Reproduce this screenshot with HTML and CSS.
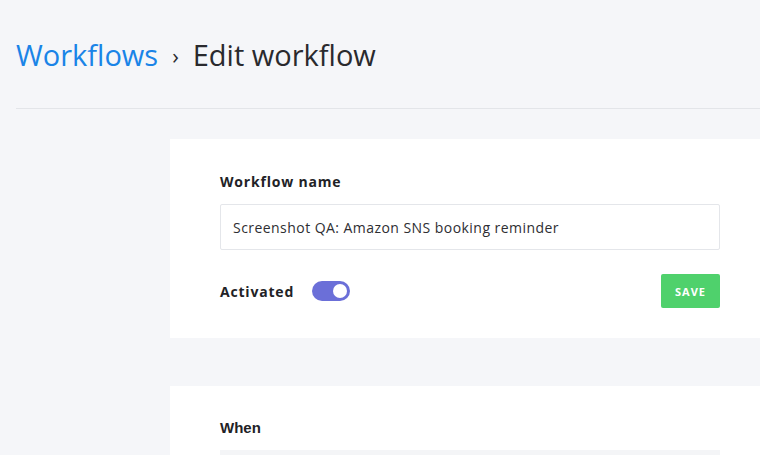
FILE: index.html
```html
<!DOCTYPE html>
<html lang="en">
<head>
  <meta charset="UTF-8">
  <meta name="viewport" content="width=device-width, initial-scale=1.0">
  <title>Edit workflow</title>
  <link rel="stylesheet" href="styles.css">
</head>
<body>
  <header class="page-header">
    <h1 class="breadcrumb">
      <a href="#workflows" class="crumb-link">Workflows</a>
      <span class="crumb-sep">›</span>
      <span class="crumb-current">Edit workflow</span>
    </h1>
  </header>
  <main class="content">
    <section class="card">
      <label class="field-label" for="workflowName">Workflow name</label>
      <input id="workflowName" class="text-input" type="text" value="Screenshot QA: Amazon SNS booking reminder">
      <div class="card-actions">
        <div class="activated">
          <span class="field-label inline">Activated</span>
          <span class="toggle"><span class="toggle-knob"></span></span>
        </div>
        <button class="save-button">Save</button>
      </div>
    </section>
    <section class="card">
      <h2 class="section-title">When</h2>
      <div class="select-box"></div>
    </section>
  </main>
</body>
</html>
```

FILE: styles.css
```css
html, body {
  margin: 0;
  padding: 0;
  overflow: hidden;
}

body {
  font-family: "Open Sans", "Noto Sans", sans-serif;
  background: #f5f6f9;
  color: #2a2a2e;
  width: 760px;
  height: 455px;
}

.page-header {
  margin-left: 16px;
  padding-top: 35px;
  padding-bottom: 33px;
  border-bottom: 1px solid #e3e5e9;
}

.breadcrumb {
  margin: 0;
  font-weight: 400;
  font-size: 29px;
  line-height: 40px;
  display: flex;
  align-items: center;
  gap: 14px;
}

.crumb-link {
  color: #1a84e7;
  text-decoration: none;
}

.crumb-sep {
  font-size: 22px;
  color: #2a2a2e;
}

.crumb-current {
  color: #2a2a2e;
}

.content {
  padding-left: 170px;
  padding-top: 30px;
}

.card {
  background: #ffffff;
  width: 500px;
  padding: 33px 50px 30px;
  margin-bottom: 48px;
}

.field-label {
  display: block;
  font-weight: 700;
  font-size: 14px;
  letter-spacing: 0.8px;
  color: #222226;
  margin-bottom: 13px;
}

.field-label.inline {
  display: inline;
  margin: 0;
}

.text-input {
  box-sizing: border-box;
  width: 500px;
  height: 46px;
  border: 1px solid #e4e6ea;
  border-radius: 2px;
  padding: 0 12px;
  font-family: inherit;
  font-size: 14px;
  letter-spacing: 0.45px;
  color: #2e2e32;
  outline: none;
}

.card-actions {
  display: flex;
  justify-content: space-between;
  align-items: center;
  margin-top: 24px;
}

.activated {
  display: flex;
  align-items: center;
  gap: 18px;
}

.toggle {
  width: 38px;
  height: 20px;
  border-radius: 10px;
  background: #6b6fd8;
  display: flex;
  align-items: center;
  justify-content: flex-end;
  padding: 0 3px;
  box-sizing: border-box;
}

.toggle-knob {
  width: 14px;
  height: 14px;
  border-radius: 50%;
  background: #ffffff;
}

.save-button {
  background: #4fd16c;
  color: #ffffff;
  border: none;
  border-radius: 2px;
  width: 59px;
  height: 34px;
  font-family: inherit;
  font-weight: 700;
  font-size: 11px;
  letter-spacing: 1px;
  text-transform: uppercase;
}

.section-title {
  margin: 0 0 14px;
  font-family: "Liberation Sans", Arial, sans-serif;
  font-weight: 700;
  font-size: 15px;
  color: #222226;
}

.select-box {
  height: 6px;
  background: #f4f5f7;
}
```
